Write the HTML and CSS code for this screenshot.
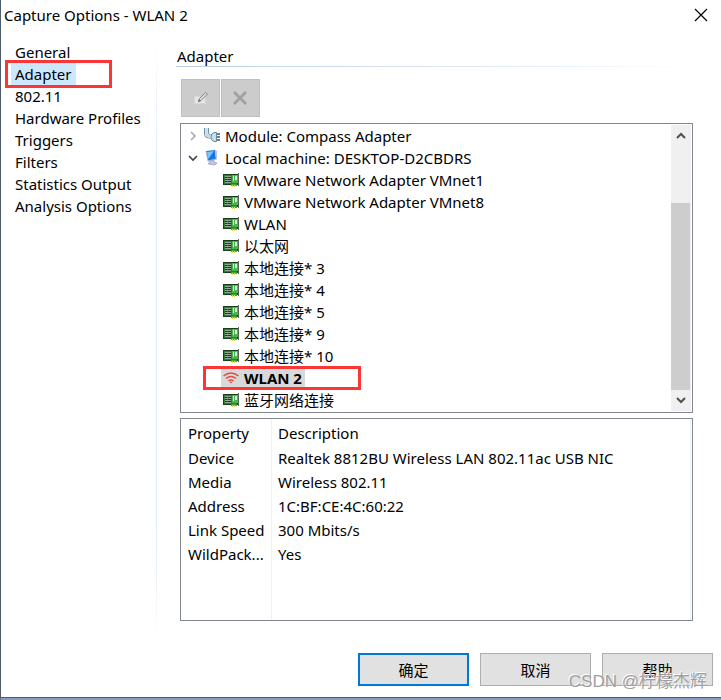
FILE: index.html
```html
<!DOCTYPE html>
<html lang="zh-CN">
<head>
<meta charset="utf-8">
<title>Capture Options - WLAN 2</title>
<link rel="stylesheet" href="styles.css">
</head>
<body>
<svg class="defs" aria-hidden="true">
  <symbol id="nic" viewBox="0 0 16 16">
    <path d="M0 2h15v11H0z" fill="#173f1c"/>
    <path d="M1 3h13v9H1z" fill="#2e7d32"/>
    <path d="M2 4h6v1H2zM2 6h6v1H2zM2 8h6v1H2zM2 10h6v1H2z" fill="#8fa891"/>
    <path d="M2 5h2v1H2zM5 5h3v1H5zM2 7h2v1H2zM5 7h3v1H5zM2 9h2v1H2zM5 9h3v1H5z" fill="#27302a"/>
    <path d="M9 3h6v8H9z" fill="#48b64c"/>
    <path d="M10 4h1v5h-1zM12 4h2v4h-2z" fill="#d4efd2"/>
    <path d="M8 12h6v2H8z" fill="#3fa83f"/>
    <path d="M9 13h1v2H9zM11 13h1v2h-1z" fill="#f0cf3a"/>
    <path d="M15 1h1v13h-1z" fill="#59645a"/>
  </symbol>
</svg>
<div class="window">
  <header class="titlebar">
    <h1>Capture Options - WLAN 2</h1>
    <button class="close" type="button" aria-label="Close">
      <svg width="12" height="12" viewBox="0 0 12 12"><path d="M0 0l12 12M12 0L0 12" stroke="#000" stroke-width="1.2"/></svg>
    </button>
  </header>
  <div class="body">
    <nav class="nav">
      <a href="#general">General</a>
      <a href="#adapter" class="current" aria-current="page">Adapter</a>
      <a href="#wifi">802.11</a>
      <a href="#profiles">Hardware Profiles</a>
      <a href="#triggers">Triggers</a>
      <a href="#filters">Filters</a>
      <a href="#statistics">Statistics Output</a>
      <a href="#analysis">Analysis Options</a>
    </nav>
    <main class="main">
      <h2>Adapter</h2>
      <div class="content">
        <div class="toolbar">
          <button type="button" disabled aria-label="Edit">
            <svg width="16" height="16" viewBox="0 0 16 16"><path d="M1.500 6.500h11v7h-11z" fill="#e6e6e6" stroke="#d6d6d6"/><path d="M5.500 11.500l1-3 6-6 2 1.500-6.500 6.500z" fill="#dedede" stroke="#858585"/><path d="M5 12l1-3 2 2z" fill="#777"/></svg>
          </button>
          <button type="button" disabled aria-label="Delete">
            <svg width="16" height="16" viewBox="0 0 16 16"><path d="M1 2l12 12M13 2L1 14" stroke="#a0a0a0" stroke-width="2.600"/></svg>
          </button>
        </div>
        <div class="tree">
          <ul class="rows">
            <li>
              <svg class="twist" viewBox="0 0 12 12"><path d="M4 2l4 4-4 4" fill="none" stroke="#a6a6a6" stroke-width="1.500"/></svg>
              <svg class="icon" viewBox="0 0 16 16"><path d="M.5 0v6q0 4 4 4H7M4.500 0v5q0 2 2 2H8" fill="none" stroke="#6d90a8"/><path d="M2.500 0v6q0 2.500 4 2.500" fill="none" stroke="#c3dbea" stroke-width="2.500"/><path d="M12.500 4.500H10q-3 1-3 4.500t3 4.500h2.500z" fill="#c9deeb" stroke="#668da8"/><path d="M13 6h3M13 9h3M13 12h3" stroke="#4c5358" stroke-width="1.500"/></svg>
              <span>Module: Compass Adapter</span>
            </li>
            <li>
              <svg class="twist" viewBox="0 0 12 12"><path d="M2 4l4 4 4-4" fill="none" stroke="#404040" stroke-width="1.600"/></svg>
              <svg class="icon" viewBox="0 0 16 16"><path d="M2 1l9-1 1 9-8 2z" fill="#1976e0"/><path d="M3 2l7-1-5 7-1 1z" fill="#78c5fa"/><path d="M11 0l2 1v8l-1 1z" fill="#b9bfe0"/><path d="M6 11l4-1v2l3 1-2 2-7-1 1-1z" fill="#bfc5dd" stroke="#8690b8" stroke-width=".6"/><path d="M2 1l2 10 8-2" fill="none" stroke="#a7b4dc"/></svg>
              <span>Local machine: DESKTOP-D2CBDRS</span>
            </li>
            <li class="child"><svg class="icon"><use href="#nic"/></svg><span>VMware Network Adapter VMnet1</span></li>
            <li class="child"><svg class="icon"><use href="#nic"/></svg><span>VMware Network Adapter VMnet8</span></li>
            <li class="child"><svg class="icon"><use href="#nic"/></svg><span>WLAN</span></li>
            <li class="child"><svg class="icon"><use href="#nic"/></svg><span>以太网</span></li>
            <li class="child"><svg class="icon"><use href="#nic"/></svg><span>本地连接* 3</span></li>
            <li class="child"><svg class="icon"><use href="#nic"/></svg><span>本地连接* 4</span></li>
            <li class="child"><svg class="icon"><use href="#nic"/></svg><span>本地连接* 5</span></li>
            <li class="child"><svg class="icon"><use href="#nic"/></svg><span>本地连接* 9</span></li>
            <li class="child"><svg class="icon"><use href="#nic"/></svg><span>本地连接* 10</span></li>
            <li class="child selected">
              <div class="pick"><svg class="icon" viewBox="0 0 16 16"><path d="M0.500 6Q8 0 15.500 6M3 8.500Q8 4.500 13 8.500M5.500 11Q8 9 10.500 11" fill="none" stroke="#e34b48" stroke-width="1.600"/><path d="M6.500 12Q8 11 9.500 12L8 13.500z" fill="#e34b48"/></svg><span>WLAN 2</span></div>
            </li>
            <li class="child"><svg class="icon"><use href="#nic"/></svg><span>蓝牙网络连接</span></li>
          </ul>
          <div class="scroll">
            <svg viewBox="0 0 10 10"><path d="M1 7l4-4 4 4" fill="none" stroke="#505050" stroke-width="2"/></svg>
            <div class="thumb"></div>
            <svg viewBox="0 0 10 10"><path d="M1 3l4 4 4-4" fill="none" stroke="#505050" stroke-width="2"/></svg>
          </div>
        </div>
        <div class="details">
          <table>
            <thead><tr><th>Property</th><th>Description</th></tr></thead>
            <tbody>
              <tr><td>Device</td><td>Realtek 8812BU Wireless LAN 802.11ac USB NIC</td></tr>
              <tr><td>Media</td><td>Wireless 802.11</td></tr>
              <tr><td>Address</td><td>1C:BF:CE:4C:60:22</td></tr>
              <tr><td>Link Speed</td><td>300 Mbits/s</td></tr>
              <tr><td>WildPack...</td><td>Yes</td></tr>
            </tbody>
          </table>
        </div>
      </div>
    </main>
  </div>
  <footer class="actions">
    <button type="button" class="default">确定</button>
    <button type="button">取消</button>
    <button type="button">帮助</button>
  </footer>
  <div class="watermark">CSDN @柠檬杰辉</div>
</div>
</body>
</html>
```
FILE: styles.css
```css
*, *::after { box-sizing: border-box; }

body {
  margin: 0;
  background: #fff;
  color: #000;
  font: 15px/22px "Noto Sans", "Noto Sans CJK SC", sans-serif;
}

h1, h2, ul { margin: 0; padding: 0; font-size: 15px; font-weight: 400; }
button { font: inherit; color: inherit; padding: 0; }
.defs { display: none; }

.window {
  position: relative;
  display: flex;
  flex-direction: column;
  min-height: 100vh;
  border-left: 1px solid #505c68;
  border-bottom: 2px solid #829dc0;
  box-shadow: inset 0 -1px #505c68;
}

.titlebar {
  display: flex;
  align-items: center;
  justify-content: space-between;
  height: 30px;
  padding: 0 14px 0 3px;
}

.close {
  display: flex;
  border: 0;
  background: none;
}
.close svg { overflow: visible; }

.body {
  flex: 1;
  display: grid;
  grid-template-columns: 156px 1fr;
  padding-top: 11px;
}

.nav {
  display: flex;
  flex-direction: column;
  align-items: flex-start;
  padding-left: 10px;
  background: linear-gradient(transparent, #dfe9f5 20%, #dfe9f5 80%, transparent) right / 1px 100% no-repeat;
}

.nav a {
  position: relative;
  padding: 0 4px;
  color: inherit;
  text-decoration: none;
}
.nav .current { background: #cce8ff; }

.nav .current::after,
.selected::after {
  content: "";
  position: absolute;
  border: 3px solid #fa3637;
}
.nav .current::after { top: -3px; left: -6px; width: 107px; height: 28px; }

.main {
  display: flex;
  flex-direction: column;
  padding: 0 28px 22px 19px;
}

.main h2 {
  padding: 4px 0 0 1px;
  background: linear-gradient(90deg, #b5d0ea, #e6effa 70%, transparent) bottom / 100% 1px no-repeat;
}

.content {
  flex: 1;
  display: flex;
  flex-direction: column;
  padding: 12px 0 0 4px;
}

.toolbar {
  display: flex;
  gap: 1px;
  padding-left: 1px;
  margin-bottom: 6px;
}
.toolbar button {
  display: grid;
  place-items: center;
  width: 39px;
  height: 38px;
  border: 1px solid #bfbfbf;
  background: #ccc;
}

.tree {
  display: flex;
  margin-bottom: 5px;
  padding: 1px;
  border: 1px solid #828790;
}

.rows { flex: 1; list-style: none; }
.rows li {
  position: relative;
  display: flex;
  align-items: center;
  height: 22px;
  padding-left: 5px;
}
.rows .child { padding-left: 41px; }
.twist { width: 12px; height: 12px; margin-right: 5px; }
.icon { flex: none; width: 16px; height: 16px; margin-right: 5px; }

.pick {
  display: flex;
  align-items: center;
  height: 19px;
  margin-left: -2px;
  padding: 0 3px 0 2px;
  background: #d9d9d9;
  font-weight: 700;
}
.selected::after { top: -1px; left: 21px; width: 158px; height: 24px; }

.scroll {
  display: flex;
  flex-direction: column;
  align-items: center;
  width: 20px;
  padding: 6px 0;
  background: #f0f0f0;
}
.scroll svg { width: 10px; height: 10px; }
.thumb {
  flex: 1;
  width: 19px;
  margin: 62px 1px 5px 0;
  background: #cdcdcd;
}

.details {
  flex: 1;
  padding: 1px;
  border: 1px solid #828790;
  background:
    linear-gradient(#e5f1fb, #e5f1fb) 90px 0 / 1px 100% no-repeat,
    linear-gradient(#e5f1fb, #e5f1fb) right 1px top / 1px 100% no-repeat;
}
.details table { width: 100%; border-collapse: collapse; table-layout: fixed; }
.details th, .details td {
  height: 24px;
  padding: 0 0 0 6px;
  font-weight: 400;
  text-align: left;
  line-height: 24px;
  white-space: nowrap;
}
.details th { height: 26px; }
.details th:first-child { width: 90px; }

.actions {
  display: flex;
  justify-content: flex-end;
  gap: 11px;
  padding: 10px 8px 12px;
}
.actions button {
  width: 111px;
  height: 33px;
  border: 1px solid #adadad;
  background: #e1e1e1;
}
.actions .default { border: 2px solid #0078d7; }

.watermark {
  position: absolute;
  right: 14px;
  bottom: 4px;
  color: #a0a0a0;
  font: 17px/24px "Liberation Sans", "Noto Sans CJK SC", sans-serif;
  text-shadow: -1px -1px #fff;
  pointer-events: none;
}
```
